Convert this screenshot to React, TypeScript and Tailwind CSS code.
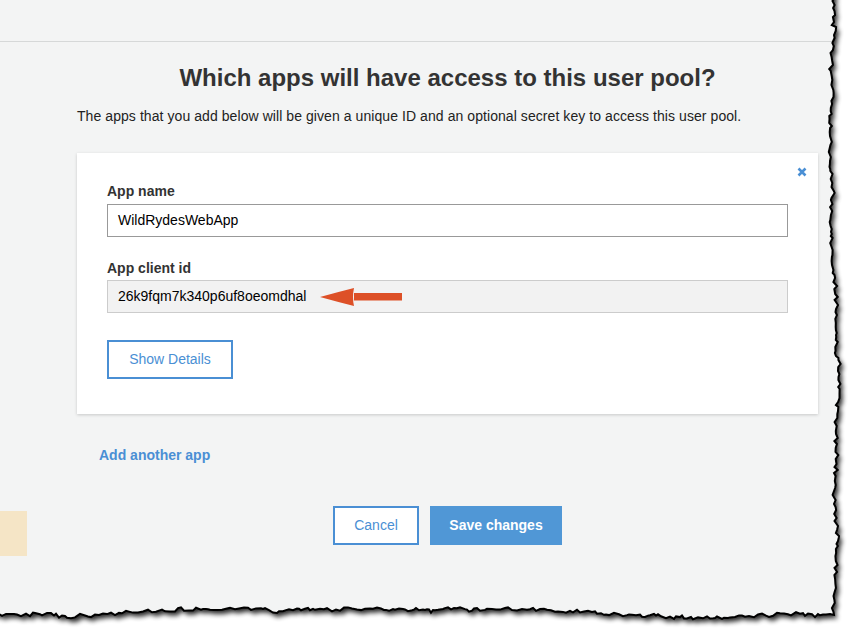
import { useMemo } from 'react';

// deterministic noise so the torn edge looks the same every render
function makeRandom(seed: number) {
  let s = seed;
  return () => {
    s = (s * 16807) % 2147483647;
    return (s - 1) / 2147483646;
  };
}

function tornEdgePath() {
  const rand = makeRandom(42);
  const pts: string[] = ['M -10 -10'];
  // right edge, top to bottom
  let drift = 0;
  for (let y = -10; y <= 612; y += 2 + Math.round(rand() * 3)) {
    drift += (rand() - 0.5) * 2.2;
    drift = Math.max(-5, Math.min(4, drift));
    const x = 835 + drift + (rand() - 0.5) * 3.6;
    pts.push(`L ${x.toFixed(1)} ${y}`);
  }
  // bottom edge, right to left
  drift = 0;
  for (let x = 834; x >= -10; x -= 2 + Math.round(rand() * 3)) {
    drift += (rand() - 0.5) * 2.2;
    drift = Math.max(-5, Math.min(4, drift));
    const y = 614 + drift + (rand() - 0.5) * 3.6;
    pts.push(`L ${x} ${y.toFixed(1)}`);
  }
  pts.push('Z');
  return pts.join(' ');
}

const TornEdge = () => {
  const inside = useMemo(() => tornEdgePath(), []);
  const outside = `M -20 -20 H 871 V 653 H -20 Z ${inside}`;
  return (
    <svg
      className="absolute inset-0 pointer-events-none"
      width="851"
      height="633"
      viewBox="0 0 851 633"
    >
      <defs>
        <filter id="edgeBlur" x="-10%" y="-10%" width="120%" height="120%">
          <feGaussianBlur stdDeviation="2.6" />
        </filter>
        <mask id="outsideMask">
          <rect x="-20" y="-20" width="891" height="673" fill="white" />
          <path d={inside} fill="black" />
        </mask>
      </defs>
      <path d={outside} fill="white" fillRule="evenodd" />
      <g mask="url(#outsideMask)">
        <path
          d={inside}
          transform="translate(3 4)"
          fill="#000"
          opacity="0.85"
          filter="url(#edgeBlur)"
        />
      </g>
      <path d={inside} fill="none" stroke="#000" strokeWidth="2" />
    </svg>
  );
};

const App = () => {
  return (
    <div className="relative w-[851px] h-[633px] overflow-hidden bg-[#f3f4f4] font-['Liberation_Sans',Arial,sans-serif] text-[#333]">
      <div className="h-[42px] border-b border-[#d6d8d8]" />

      <div className="ml-[77px] w-[741px]">
        <h1 className="pt-[22px] text-center text-[24px] leading-[28px] font-bold text-[#333]">
          Which apps will have access to this user pool?
        </h1>
        <p className="mt-[15px] text-[14px] leading-[18px] tracking-[0.07px] text-[#222]">
          The apps that you add below will be given a unique ID and an optional secret key to access
          this user pool.
        </p>

        <div className="relative mt-[28px] bg-white pt-[28px] pb-[35px] px-[30px] shadow-[0_1px_3px_rgba(0,0,0,0.18)]">
          <button className="absolute top-[14px] right-[11px] text-[#4a8fd4]">
            <svg width="10" height="10" viewBox="0 0 10 10">
              <path d="M1.5 1.5 L8.5 8.5 M8.5 1.5 L1.5 8.5" stroke="currentColor" strokeWidth="2.6" />
            </svg>
          </button>

          <label className="block text-[14px] leading-[20px] font-bold text-[#333] mb-[3px]">
            App name
          </label>
          <div className="h-[33px] border border-[#999] flex items-center px-[10px] text-[14px] text-black">
            WildRydesWebApp
          </div>

          <label className="block mt-[21px] text-[14px] leading-[20px] font-bold text-[#333] mb-[2px]">
            App client id
          </label>
          <div className="relative h-[33px] border border-[#ccc] bg-[#f2f2f2] flex items-center px-[10px] text-[14px] text-black">
            26k9fqm7k340p6uf8oeomdhal
            <svg
              className="absolute left-[212px] top-[7px]"
              width="83"
              height="19"
              viewBox="0 0 83 19"
            >
              <path d="M34 5 H82 V12.5 H34 Z" fill="#dd5027" />
              <path d="M0 9 Q18 4 34 0 Q32 9 34 18 Q18 14 0 9 Z" fill="#dd5027" />
            </svg>
          </div>

          <button className="mt-[27px] w-[126px] h-[39px] border-2 border-[#4a8fd4] text-[#4a8fd4] text-[14px]">
            Show Details
          </button>
        </div>
      </div>

      <div className="mt-[31px] ml-[99px] text-[14px] leading-[20px] font-bold text-[#4a8fd4]">
        Add another app
      </div>

      <div className="mt-[41px] flex items-start">
        <div className="mt-[5px] w-[27px] h-[45px] bg-[#f5e5c6]" />
        <div className="ml-[306px] flex gap-[11px]">
          <button className="w-[86px] h-[39px] bg-white border-2 border-[#4a8fd4] text-[#4a8fd4] text-[14px]">
            Cancel
          </button>
          <button className="w-[132px] h-[39px] bg-[#5097d6] text-white text-[14px] font-bold">
            Save changes
          </button>
        </div>
      </div>

      <TornEdge />
    </div>
  );
};

export default App;
